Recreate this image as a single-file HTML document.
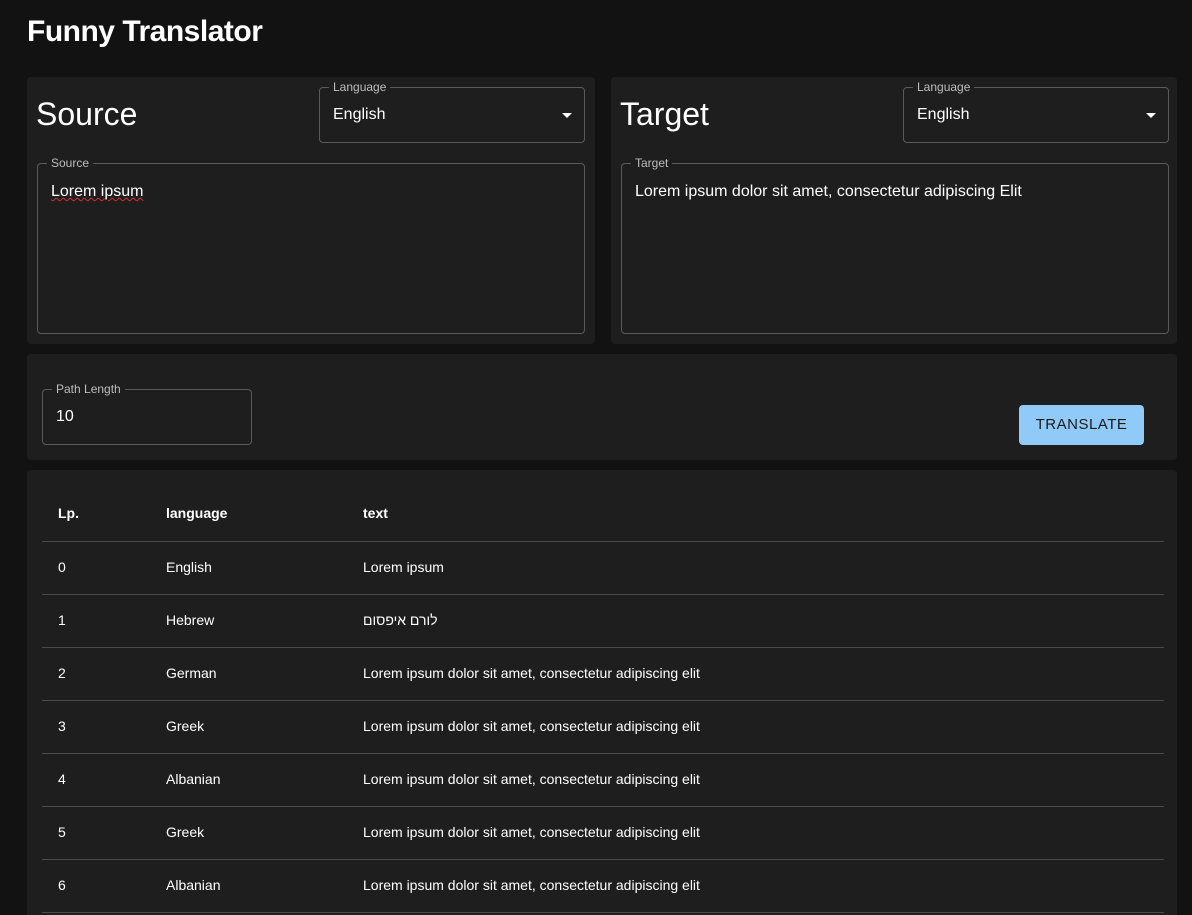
<!DOCTYPE html>
<html><head><style>
*{box-sizing:border-box;margin:0;padding:0}
html,body{width:1192px;height:915px;overflow:hidden}
body{background:#121212;color:#fff;font-family:"Liberation Sans",Roboto,"Noto Sans CJK JP",sans-serif;position:relative}
.abs{position:absolute}
h1{position:absolute;left:27px;top:15px;font-size:30px;font-weight:bold;letter-spacing:-0.5px}
.card{position:absolute;background:#1e1e1e;border-radius:4px}
.field{position:absolute;border:1px solid #5a5a5a;border-radius:4px}
.lbl{position:absolute;top:-8px;left:9px;padding:0 4px;background:#1e1e1e;font-size:12px;color:#bdbdbd;line-height:14px}
.val{position:absolute;left:13px;font-size:16px}
.big{position:absolute;font-size:32px}
.arrow{position:absolute;right:12px;top:25px;width:0;height:0;border-left:5px solid transparent;border-right:5px solid transparent;border-top:5px solid #fff}
.row{position:absolute;left:42px;width:1122px;height:53px;border-bottom:1px solid #4a4a4a;font-size:14px}
.row span{position:absolute;top:17px}
</style></head><body>
<h1>Funny Translator</h1>

<div class="card" style="left:27px;top:77px;width:568px;height:267px">
  <div class="big" style="left:9px;top:19px">Source</div>
  <div class="field" style="left:292px;top:10px;width:266px;height:56px"><div class="lbl">Language</div><div class="val" style="top:18px">English</div><div class="arrow"></div></div>
  <div class="field" style="left:10px;top:86px;width:548px;height:171px"><div class="lbl">Source</div><div class="val" style="top:19px;text-decoration:underline wavy #d32f2f;text-decoration-thickness:1px">Lorem ipsum</div></div>
</div>

<div class="card" style="left:611px;top:77px;width:566px;height:267px">
  <div class="big" style="left:9px;top:19px">Target</div>
  <div class="field" style="left:292px;top:10px;width:266px;height:56px"><div class="lbl">Language</div><div class="val" style="top:18px">English</div><div class="arrow"></div></div>
  <div class="field" style="left:10px;top:86px;width:548px;height:171px"><div class="lbl">Target</div><div class="val" style="top:19px">Lorem ipsum dolor sit amet, consectetur adipiscing Elit</div></div>
</div>

<div class="card" style="left:27px;top:354px;width:1150px;height:106px">
  <div class="field" style="left:15px;top:35px;width:210px;height:56px"><div class="lbl">Path Length</div><div class="val" style="top:18px">10</div></div>
  <div class="abs" style="left:992px;top:51px;width:125px;height:40px;background:#90caf9;border-radius:4px;color:#1a1a1a;font-size:15px;letter-spacing:0.5px;text-align:center;line-height:40px">TRANSLATE</div>
</div>

<div class="card" style="left:27px;top:470px;width:1150px;height:460px"></div>
<div class="row" style="top:488px;height:54px;font-weight:bold"><span style="left:16px">Lp.</span><span style="left:124px">language</span><span style="left:321px">text</span></div>
<div class="row" style="top:542px"><span style="left:16px">0</span><span style="left:124px">English</span><span style="left:321px">Lorem ipsum</span></div>
<div class="row" style="top:595px"><span style="left:16px">1</span><span style="left:124px">Hebrew</span><span style="left:321px" dir="rtl">לורם איפסום</span></div>
<div class="row" style="top:648px"><span style="left:16px">2</span><span style="left:124px">German</span><span style="left:321px">Lorem ipsum dolor sit amet, consectetur adipiscing elit</span></div>
<div class="row" style="top:701px"><span style="left:16px">3</span><span style="left:124px">Greek</span><span style="left:321px">Lorem ipsum dolor sit amet, consectetur adipiscing elit</span></div>
<div class="row" style="top:754px"><span style="left:16px">4</span><span style="left:124px">Albanian</span><span style="left:321px">Lorem ipsum dolor sit amet, consectetur adipiscing elit</span></div>
<div class="row" style="top:807px"><span style="left:16px">5</span><span style="left:124px">Greek</span><span style="left:321px">Lorem ipsum dolor sit amet, consectetur adipiscing elit</span></div>
<div class="row" style="top:860px"><span style="left:16px">6</span><span style="left:124px">Albanian</span><span style="left:321px">Lorem ipsum dolor sit amet, consectetur adipiscing elit</span></div>
</body></html>
